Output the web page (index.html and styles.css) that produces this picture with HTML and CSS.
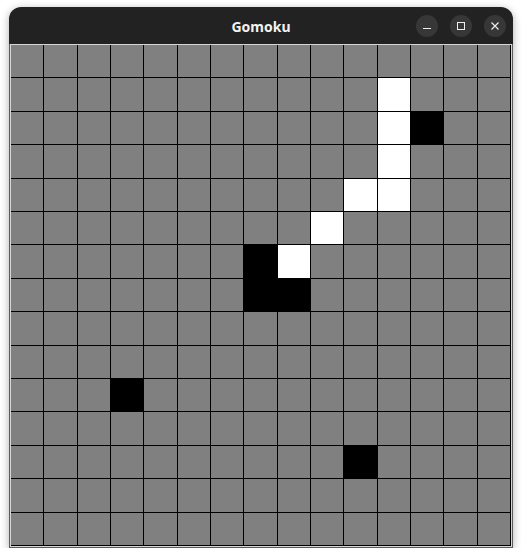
FILE: index.html
```html
<!DOCTYPE html>
<html>
<head>
<meta charset="utf-8">
<title>Gomoku</title>
<link rel="stylesheet" href="styles.css">
</head>
<body>
<div class="window">
  <div class="titlebar">
    <div class="spacer"></div>
    <div class="title">Gomoku</div>
    <div class="controls">
      <div class="btn"><svg width="22" height="22" viewBox="0 0 22 22"><line x1="7" y1="13.5" x2="15" y2="13.5" stroke="#eeeeee" stroke-width="1"/></svg></div>
      <div class="btn"><svg width="22" height="22" viewBox="0 0 22 22"><rect x="7.5" y="7.5" width="7" height="7" fill="none" stroke="#eeeeee" stroke-width="1"/></svg></div>
      <div class="btn"><svg width="22" height="22" viewBox="0 0 22 22"><path d="M7.5 7.5 L14.5 14.5 M14.5 7.5 L7.5 14.5" stroke="#eeeeee" stroke-width="1.2"/></svg></div>
    </div>
  </div>
  <div class="client">
    <div class="board">
<span class="cell"></span><span class="cell"></span><span class="cell"></span><span class="cell"></span><span class="cell"></span><span class="cell"></span><span class="cell"></span><span class="cell"></span><span class="cell"></span><span class="cell"></span><span class="cell"></span><span class="cell"></span><span class="cell"></span><span class="cell"></span><span class="cell"></span>
<span class="cell"></span><span class="cell"></span><span class="cell"></span><span class="cell"></span><span class="cell"></span><span class="cell"></span><span class="cell"></span><span class="cell"></span><span class="cell"></span><span class="cell"></span><span class="cell"></span><span class="cell white"></span><span class="cell"></span><span class="cell"></span><span class="cell"></span>
<span class="cell"></span><span class="cell"></span><span class="cell"></span><span class="cell"></span><span class="cell"></span><span class="cell"></span><span class="cell"></span><span class="cell"></span><span class="cell"></span><span class="cell"></span><span class="cell"></span><span class="cell white"></span><span class="cell black"></span><span class="cell"></span><span class="cell"></span>
<span class="cell"></span><span class="cell"></span><span class="cell"></span><span class="cell"></span><span class="cell"></span><span class="cell"></span><span class="cell"></span><span class="cell"></span><span class="cell"></span><span class="cell"></span><span class="cell"></span><span class="cell white"></span><span class="cell"></span><span class="cell"></span><span class="cell"></span>
<span class="cell"></span><span class="cell"></span><span class="cell"></span><span class="cell"></span><span class="cell"></span><span class="cell"></span><span class="cell"></span><span class="cell"></span><span class="cell"></span><span class="cell"></span><span class="cell white"></span><span class="cell white"></span><span class="cell"></span><span class="cell"></span><span class="cell"></span>
<span class="cell"></span><span class="cell"></span><span class="cell"></span><span class="cell"></span><span class="cell"></span><span class="cell"></span><span class="cell"></span><span class="cell"></span><span class="cell"></span><span class="cell white"></span><span class="cell"></span><span class="cell"></span><span class="cell"></span><span class="cell"></span><span class="cell"></span>
<span class="cell"></span><span class="cell"></span><span class="cell"></span><span class="cell"></span><span class="cell"></span><span class="cell"></span><span class="cell"></span><span class="cell black"></span><span class="cell white"></span><span class="cell"></span><span class="cell"></span><span class="cell"></span><span class="cell"></span><span class="cell"></span><span class="cell"></span>
<span class="cell"></span><span class="cell"></span><span class="cell"></span><span class="cell"></span><span class="cell"></span><span class="cell"></span><span class="cell"></span><span class="cell black"></span><span class="cell black"></span><span class="cell"></span><span class="cell"></span><span class="cell"></span><span class="cell"></span><span class="cell"></span><span class="cell"></span>
<span class="cell"></span><span class="cell"></span><span class="cell"></span><span class="cell"></span><span class="cell"></span><span class="cell"></span><span class="cell"></span><span class="cell"></span><span class="cell"></span><span class="cell"></span><span class="cell"></span><span class="cell"></span><span class="cell"></span><span class="cell"></span><span class="cell"></span>
<span class="cell"></span><span class="cell"></span><span class="cell"></span><span class="cell"></span><span class="cell"></span><span class="cell"></span><span class="cell"></span><span class="cell"></span><span class="cell"></span><span class="cell"></span><span class="cell"></span><span class="cell"></span><span class="cell"></span><span class="cell"></span><span class="cell"></span>
<span class="cell"></span><span class="cell"></span><span class="cell"></span><span class="cell black"></span><span class="cell"></span><span class="cell"></span><span class="cell"></span><span class="cell"></span><span class="cell"></span><span class="cell"></span><span class="cell"></span><span class="cell"></span><span class="cell"></span><span class="cell"></span><span class="cell"></span>
<span class="cell"></span><span class="cell"></span><span class="cell"></span><span class="cell"></span><span class="cell"></span><span class="cell"></span><span class="cell"></span><span class="cell"></span><span class="cell"></span><span class="cell"></span><span class="cell"></span><span class="cell"></span><span class="cell"></span><span class="cell"></span><span class="cell"></span>
<span class="cell"></span><span class="cell"></span><span class="cell"></span><span class="cell"></span><span class="cell"></span><span class="cell"></span><span class="cell"></span><span class="cell"></span><span class="cell"></span><span class="cell"></span><span class="cell black"></span><span class="cell"></span><span class="cell"></span><span class="cell"></span><span class="cell"></span>
<span class="cell"></span><span class="cell"></span><span class="cell"></span><span class="cell"></span><span class="cell"></span><span class="cell"></span><span class="cell"></span><span class="cell"></span><span class="cell"></span><span class="cell"></span><span class="cell"></span><span class="cell"></span><span class="cell"></span><span class="cell"></span><span class="cell"></span>
<span class="cell"></span><span class="cell"></span><span class="cell"></span><span class="cell"></span><span class="cell"></span><span class="cell"></span><span class="cell"></span><span class="cell"></span><span class="cell"></span><span class="cell"></span><span class="cell"></span><span class="cell"></span><span class="cell"></span><span class="cell"></span><span class="cell"></span>
    </div>
  </div>
</div>
</body>
</html>
```
FILE: styles.css
```css
html, body {
  margin: 0;
  padding: 0;
  background: #ffffff;
}
body {
  padding: 7px 0 0 9px;
}
.window {
  width: 504px;
  border-radius: 12px 12px 0 0;
  overflow: hidden;
  box-shadow: 0 2px 9px rgba(0, 0, 0, 0.32);
}
.titlebar {
  height: 37px;
  background: #222222;
  display: grid;
  grid-template-columns: 1fr auto 1fr;
  align-items: center;
}
.title {
  font-family: "Noto Sans", "DejaVu Sans", sans-serif;
  font-weight: 700;
  font-size: 14px;
  color: #f2f2f2;
  padding-top: 1px;
}
.controls {
  display: flex;
  justify-content: flex-end;
  gap: 12px;
  padding-right: 7px;
}
.btn {
  width: 22px;
  height: 22px;
  border-radius: 50%;
  background: #373737;
}
.btn svg {
  display: block;
}
.client {
  border: 1px solid #5c5c5c;
  border-top: none;
  background: #d6d6d6;
  padding: 1px;
}
.board {
  width: 500px;
  height: 501px;
  display: grid;
  grid-template-columns: repeat(15, 1fr);
  grid-template-rows: repeat(15, 1fr);
}
.cell {
  background: #808080;
  border-right: 1px solid #000000;
  border-bottom: 1px solid #000000;
}
.cell.black {
  background: #000000;
}
.cell.white {
  background: #ffffff;
}
```
